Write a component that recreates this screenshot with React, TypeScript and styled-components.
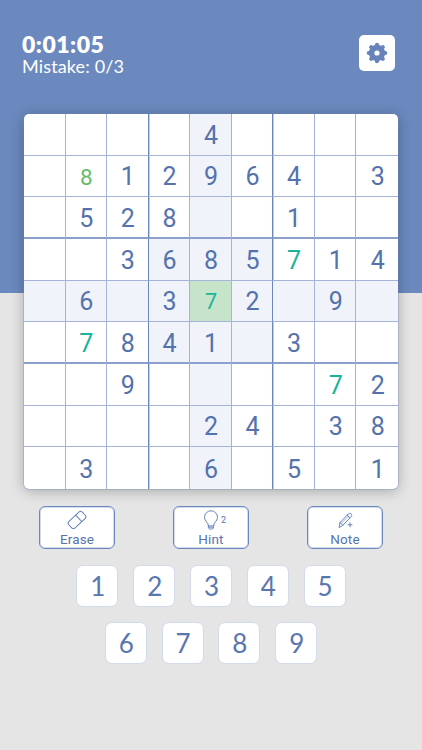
import React from 'react';
import styled, { createGlobalStyle } from 'styled-components';

const GlobalStyle = createGlobalStyle`
  *, *::before, *::after { box-sizing: border-box; }
  body { margin: 0; }
`;

const Screen = styled.main`
  width: 422px;
  height: 750px;
  overflow: hidden;
  display: flex;
  flex-direction: column;
  background: linear-gradient(#6b89be 293px, #e5e5e5 293px);
  color: #5674ad;
  font-family: Roboto, sans-serif;
`;

const Header = styled.header`
  display: flex;
  justify-content: space-between;
  height: 114px;
  padding: 33px 27px 0 22px;
  color: #fff;
  font-family: Lato, sans-serif;
`;

const Timer = styled.div`
  font-size: 23px;
  line-height: 22px;
  font-weight: 800;
  letter-spacing: 0.5px;
`;

const Mistakes = styled.div`
  font-size: 18px;
  line-height: 22px;
  font-weight: 400;
  letter-spacing: 0.15px;
`;

const SettingsButton = styled.button`
  display: grid;
  place-items: center;
  width: 36px;
  height: 36px;
  margin-top: 2px;
  padding: 0;
  border: 0;
  border-radius: 5px;
  background: #fff;
`;

const Board = styled.section`
  display: grid;
  grid-template-columns: repeat(9, 1fr);
  grid-template-rows: repeat(9, 1fr);
  flex: none;
  width: 374px;
  height: 375px;
  margin-left: 24px;
  overflow: hidden;
  border-radius: 5px;
  background: #fff;
  box-shadow: 0 0 0 0.5px rgba(107, 137, 190, 0.6), 0 2px 14px rgba(0, 0, 0, 0.28);
`;

type Tone = 'given' | 'match' | 'entered' | 'selected';

const toneColor: Record<Tone, string> = {
  given: '#5472ac',
  match: '#17b39b',
  entered: '#66bb6a',
  selected: '#20b39a',
};

const Cell = styled.div<{ $row: number; $col: number; $tone: Tone; $lit: boolean }>`
  display: flex;
  align-items: center;
  justify-content: center;
  min-width: 0;
  min-height: 0;
  padding: 2px 0 0 1px;
  border: 0 solid #a5b3d8;
  border-right-width: ${({ $col }) => ($col === 8 ? 0 : 1)}px;
  border-bottom-width: ${({ $row }) => ($row === 8 ? 0 : 1)}px;
  ${({ $col }) => ($col === 2 || $col === 5) && 'border-right-color: #6c87bd; box-shadow: 1px 0 #c3cee5;'}
  ${({ $row }) => ($row === 2 || $row === 5) && 'border-bottom: 2px solid #8ba0cc;'}
  background: ${({ $tone, $lit }) => ($tone === 'selected' ? '#c5e4c9' : $lit ? '#f0f3f9' : 'transparent')};
  color: ${({ $tone }) => toneColor[$tone]};
  font-size: ${({ $tone }) => ($tone === 'entered' ? 22.5 : $tone === 'selected' ? 21.5 : 25)}px;
  font-weight: 400;
  line-height: 1;
`;

const Actions = styled.div`
  display: flex;
  justify-content: space-between;
  flex: none;
  height: 43px;
  margin: 17px 39px 0;
`;

const ActionButton = styled.button`
  position: relative;
  display: flex;
  flex-direction: column;
  align-items: center;
  width: 76px;
  height: 43px;
  padding: 2px 0 0;
  border: 1px solid #6b89be;
  border-radius: 6px;
  background: #fff;
  box-shadow: inset 0 0 0 1px rgba(107, 137, 190, 0.3);
  color: #5674ad;
  font: 400 13.5px/16px Roboto, sans-serif;
  letter-spacing: 0.15px;
`;

const HintCount = styled.span`
  position: absolute;
  left: 47px;
  top: 8px;
  font-size: 9px;
  line-height: 10px;
`;

const Keypad = styled.div`
  display: flex;
  flex-direction: column;
  align-items: center;
  gap: 15px;
  margin-top: 16px;
`;

const KeyRow = styled.div`
  display: flex;
  gap: 14.8px;
`;

const Key = styled.button`
  display: flex;
  align-items: center;
  justify-content: center;
  width: 42px;
  height: 42px;
  padding: 0 0 0 1px;
  border: 1px solid #d3daea;
  border-radius: 7px;
  background: #fff;
  color: #5876b0;
  font: 400 26px/1 Lato, sans-serif;
`;

const Glyph = styled.svg`
  display: block;
  flex: none;
  fill: none;
  stroke: #6883b9;
  stroke-width: 1;
  stroke-linecap: round;
  stroke-linejoin: round;
`;

const GearIcon = () => (
  <Glyph width="22" height="22" viewBox="-11 -11 22 22">
    <circle r="5.4" strokeWidth="5.6" />
    {[0, 45, 90, 135, 180, 225, 270, 315].map((a) => (
      <path key={a} d="M0-7.4V-8.3" strokeWidth="4" transform={`rotate(${a})`} />
    ))}
  </Glyph>
);

const EraserIcon = () => (
  <Glyph width="22" height="22" viewBox="0 0 22 22">
    <g transform="rotate(-43 11 11)">
      <rect x="1.8" y="6.5" width="18.4" height="9" rx="2.4" />
      <path d="M13.4 6.5v9" />
    </g>
  </Glyph>
);

const BulbIcon = () => (
  <Glyph width="22" height="22" viewBox="0 0 22 22">
    <path d="M8.4 16.5c0-3.2-3.9-4.2-3.9-8.2a6.5 6.5 0 0 1 13 0c0 4-3.9 5-3.9 8.2Z" />
    <path d="M8.4 16.5v2c0 1 .8 1.6 2.6 1.6s2.6-.6 2.6-1.6v-2M8.7 18.2h4.6" />
  </Glyph>
);

const PencilIcon = () => (
  <Glyph width="22" height="22" viewBox="0 0 22 22">
    <path d="m5.2 18.1.9-4.7 8.3-8.5c1.7-1.7 4.5.7 2.8 2.6l-8.3 8.8ZM13.1 6.2l2.8 2.6M6.1 13.4l2.8 2.9M16 13.8v4M14 15.8h4" />
    <path d="m7.4 14.3 7.1-7.4" strokeWidth=".6" />
  </Glyph>
);

const puzzle = [
  '....4....',
  '.812964.3',
  '.528..1..',
  '..3685714',
  '.6.372.9.',
  '.7841.3..',
  '..9....72',
  '....24.38',
  '.3..6.5.1',
];

const toneOf = (row: number, col: number, value: string): Tone => {
  if (row === 4 && col === 4) return 'selected';
  if (row === 1 && col === 1) return 'entered';
  return value === '7' ? 'match' : 'given';
};

const isLit = (row: number, col: number) =>
  row === 4 || col === 4 || (row >= 3 && row <= 5 && col >= 3 && col <= 5);

export default function App() {
  return (
    <>
      <GlobalStyle />
      <Screen>
        <Header>
          <div>
            <Timer>0:01:05</Timer>
            <Mistakes>Mistake: 0/3</Mistakes>
          </div>
          <SettingsButton aria-label="Settings"><GearIcon /></SettingsButton>
        </Header>
        <Board>
          {puzzle.flatMap((line, row) =>
            [...line].map((value, col) => (
              <Cell key={`${row}-${col}`} $row={row} $col={col} $tone={toneOf(row, col, value)} $lit={isLit(row, col)}>
                {value === '.' ? null : value}
              </Cell>
            )),
          )}
        </Board>
        <Actions>
          <ActionButton><EraserIcon />Erase</ActionButton>
          <ActionButton><BulbIcon /><HintCount>2</HintCount>Hint</ActionButton>
          <ActionButton><PencilIcon />Note</ActionButton>
        </Actions>
        <Keypad>
          {[[1, 2, 3, 4, 5], [6, 7, 8, 9]].map((keys) => (
            <KeyRow key={keys[0]}>
              {keys.map((n) => <Key key={n}>{n}</Key>)}
            </KeyRow>
          ))}
        </Keypad>
      </Screen>
    </>
  );
}
